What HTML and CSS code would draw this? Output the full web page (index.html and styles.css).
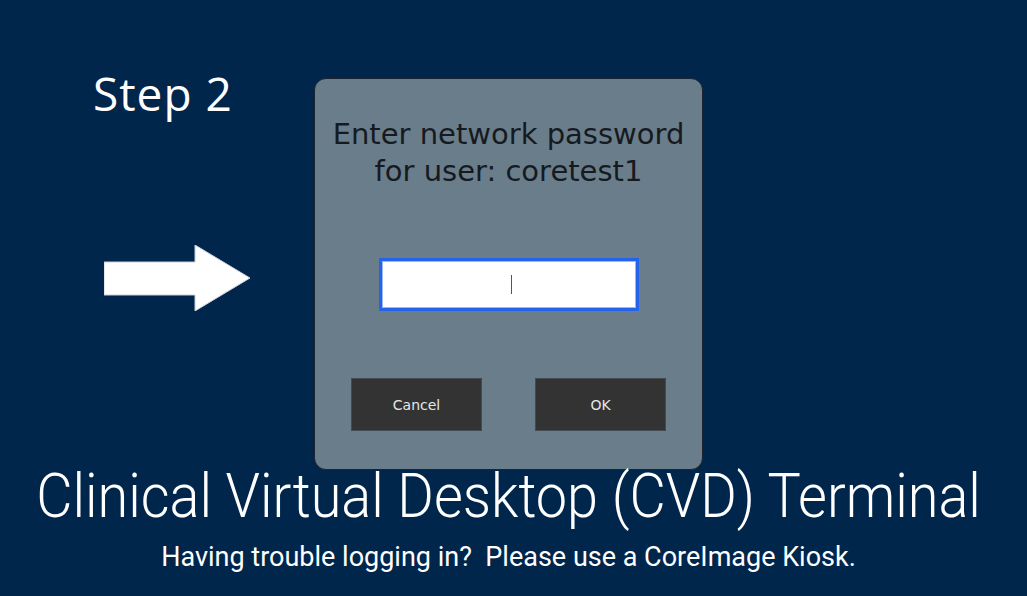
FILE: index.html
```html
<!DOCTYPE html>
<html lang="en">
<head>
    <meta charset="UTF-8">
    <meta name="viewport" content="width=device-width, initial-scale=1.0">
    <title>CVD Terminal - Step 2</title>
    <link rel="stylesheet" href="styles.css">
</head>
<body>
    <div class="stage">
        <div class="guide">
            <div class="step">Step 2</div>
            <svg class="arrow" width="146" height="66" viewBox="0 0 146 66">
                <polygon points="0,17 91,17 91,0 146,33 91,66 91,50 0,50" fill="#fff" stroke="#c9ced6" stroke-width="1"/>
            </svg>
        </div>
        <div class="dialog">
            <p class="prompt">Enter network password<br>for user: coretest1</p>
            <div class="field"><span class="caret"></span></div>
            <div class="actions">
                <button class="btn">Cancel</button>
                <button class="btn">OK</button>
            </div>
        </div>
    </div>
    <h1 class="title"><span>Clinical Virtual Desktop (CVD) Terminal</span></h1>
    <p class="help">Having trouble logging in?&nbsp; Please use a CoreImage Kiosk.</p>
</body>
</html>
```

FILE: styles.css
```css
body {
    margin: 0;
    width: 1027px;
    height: 596px;
    overflow: hidden;
    background-color: #00264c;
    font-family: "DejaVu Sans", sans-serif;
}
.stage {
    display: flex;
    padding: 78px 0 0 93px;
    gap: 65px;
}
.guide {
    width: 156px;
    display: flex;
    flex-direction: column;
}
.step {
    font-family: "Open Sans", sans-serif;
    font-size: 46px;
    letter-spacing: 1px;
    color: #fff;
    line-height: 30px;
}
.arrow {
    display: block;
    margin: 137px 0 0 11px;
}
.dialog {
    width: 389px;
    height: 392px;
    box-sizing: border-box;
    background-color: #6a7d8b;
    border: 1px solid #1b2430;
    border-radius: 12px;
    display: flex;
    flex-direction: column;
    align-items: center;
}
.dialog > * {
    flex-shrink: 0;
}
.prompt {
    margin: 37px 0 0;
    font-size: 29px;
    line-height: 37px;
    color: #161a1f;
    text-align: center;
}
.field {
    margin-top: 68px;
    width: 260px;
    height: 53px;
    box-sizing: border-box;
    background-color: #fff;
    border: 3px solid #2563ea;
    box-shadow: inset 0 0 0 1px #9ab8f5;
    display: flex;
    justify-content: center;
    align-items: center;
}
.caret {
    width: 1px;
    height: 19px;
    background-color: #555;
    margin-left: 6px;
}
.actions {
    margin-top: 67px;
    display: flex;
    gap: 53px;
}
.btn {
    width: 131px;
    height: 53px;
    background-color: #333;
    border: 1px solid #434a52;
    color: #e6e6e6;
    font-family: "DejaVu Sans", sans-serif;
    font-size: 14px;
}
.title {
    margin: -4px 0 0;
    display: flex;
    justify-content: center;
    font-family: Roboto, sans-serif;
    font-weight: 300;
    font-size: 62px;
    line-height: 60px;
    color: #fff;
    white-space: nowrap;
    padding-right: 11px;
    transform: scaleX(0.9);
}
.help {
    margin: 15px 0 0;
    font-family: Roboto, sans-serif;
    font-size: 27px;
    color: #fff;
    text-align: center;
    padding-right: 10px;
}
```
